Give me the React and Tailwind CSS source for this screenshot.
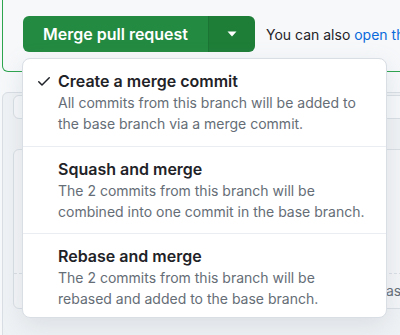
import React from "react";

const items = [
  {
    title: "Create a merge commit",
    desc: ["All commits from this branch will be added to", "the base branch via a merge commit."],
    checked: true,
  },
  {
    title: "Squash and merge",
    desc: ["The 2 commits from this branch will be", "combined into one commit in the base branch."],
  },
  {
    title: "Rebase and merge",
    desc: ["The 2 commits from this branch will be", "rebased and added to the base branch."],
  },
];

function Check() {
  return (
    <svg width="16" height="16" viewBox="0 0 16 16" fill="#1f2328">
      <path d="M13.78 4.22a.75.75 0 0 1 0 1.06l-7.25 7.25a.75.75 0 0 1-1.06 0L2.22 9.28a.751.751 0 0 1 .018-1.042.751.751 0 0 1 1.042-.018L6 10.94l6.72-6.72a.75.75 0 0 1 1.06 0Z" />
    </svg>
  );
}

export default function App() {
  return (
    <div
      className="relative w-[400px] h-[335px] overflow-hidden bg-[#f6f8fa]"
      style={{ fontFamily: "Inter, 'Noto Sans', 'Liberation Sans', sans-serif" }}
    >
      {/* merge box */}
      <div className="ml-[2px] w-[430px] h-[72px] border border-t-0 border-[#2da44e] rounded-bl-[6px] pl-[20px] pt-[16px] flex items-start">
        <div className="flex shrink-0 h-[36px] rounded-[6px] overflow-hidden text-white">
          <div className="w-[185px] shrink-0 bg-[#238a41] flex items-center justify-center text-[16px] font-semibold whitespace-nowrap">
            Merge pull request
          </div>
          <div className="w-[47px] shrink-0 bg-[#1e7e38] border-l border-[#1b7433] flex items-center justify-center">
            <svg width="10" height="6" viewBox="0 0 10 6" fill="white">
              <path d="M0.5 0.5h9L5 5.5z" />
            </svg>
          </div>
        </div>
        <div className="ml-[11px] h-[36px] flex items-center text-[14px] text-[#1f2328] whitespace-nowrap">
          You can also&nbsp;<span className="text-[#0969da]">open this</span>
        </div>
      </div>

      {/* background content */}
      <div className="ml-[2px] mt-[20px] w-[430px] h-[300px] border border-[#d8dee4] rounded-[6px] bg-[#eff2f5] pt-[2px]">
        <div className="ml-[10px] w-[400px] h-[24px] border border-[#d8dee4] rounded-[6px] bg-[#f6f8fa]" />
        <div className="ml-[10px] mt-[30px] w-[400px] h-[160px] border border-[#d8dee4] rounded-[6px] bg-[#f3f5f7] flex flex-col justify-end">
          <div className="border-t border-dashed border-[#d8dee4] h-[35px] pl-[372px] pt-[6px] text-[14px] text-[#656d76]">
            as
          </div>
        </div>
      </div>

      {/* dropdown */}
      <div className="absolute left-[22px] top-[58px] w-[365px] h-[260px] bg-white border border-[#d8dee4] rounded-[8px] shadow-[0_8px_24px_rgba(140,149,159,0.2)] overflow-hidden flex flex-col">
        {items.map((it, i) => (
          <div
            key={i}
            className={`h-[87px] shrink-0 flex pt-[11px] ${i > 0 ? "border-t border-[#eaeef2]" : ""}`}
          >
            <div className="w-[35px] shrink-0 flex justify-end pr-[6px] pt-[3px]">
              {it.checked ? <Check /> : null}
            </div>
            <div className="flex flex-col">
              <div className="text-[16px] leading-[22px] font-semibold text-[#1f2328] whitespace-nowrap">{it.title}</div>
              <div className="text-[14px] leading-[21px] text-[#656d76] whitespace-nowrap">
                {it.desc.map((d, j) => (
                  <div key={j}>{d}</div>
                ))}
              </div>
            </div>
          </div>
        ))}
      </div>
    </div>
  );
}
